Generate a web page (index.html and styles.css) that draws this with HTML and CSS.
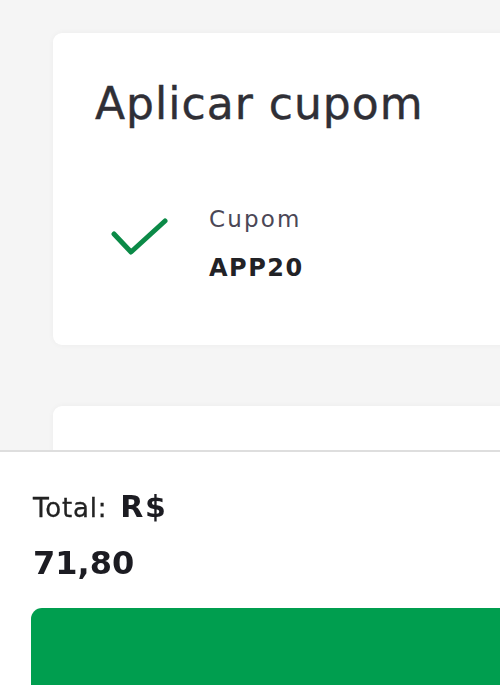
FILE: index.html
```html
<!DOCTYPE html>
<html lang="pt-BR">
<head>
<meta charset="utf-8">
<link rel="stylesheet" href="styles.css">
</head>
<body>
<main class="content">
  <section class="card coupon">
    <h1 class="title">Aplicar cupom</h1>
    <div class="coupon-row">
      <svg class="check" viewBox="0 0 57 38" width="57" height="38" aria-hidden="true">
        <path d="M3 16 L20 34 L54 3" fill="none" stroke="#0b8a47" stroke-width="5" stroke-linecap="round" stroke-linejoin="round"/>
      </svg>
      <div class="coupon-info">
        <span class="coupon-label">Cupom</span>
        <span class="coupon-code">APP20</span>
      </div>
    </div>
  </section>
  <section class="card next"></section>
</main>
<footer class="footer">
  <div class="total-line"><span class="total-label">Total:</span><strong class="currency">R$</strong></div>
  <div class="total-value">71,80</div>
  <button class="pay" type="button"></button>
</footer>
</body>
</html>
```
FILE: styles.css
```css
html, body {
  margin: 0;
  padding: 0;
  height: 100%;
  overflow: hidden;
}
body {
  background: #f5f5f5;
  font-family: "DejaVu Sans", "Liberation Sans", sans-serif;
  color: #2b2b2e;
}
.content {
  padding: 33px 0 0 53px;
  display: flex;
  flex-direction: column;
  gap: 61px;
}
.card {
  background: #fff;
  border-radius: 9px;
  width: 480px;
  box-shadow: 0 0 6px rgba(0, 0, 0, 0.04);
}
.coupon {
  height: 312px;
  box-sizing: border-box;
  padding: 45px 42px 0 42px;
}
.title {
  margin: 0;
  font-size: 44px;
  font-weight: 400;
  line-height: 52px;
  letter-spacing: 1px;
  color: #2f2f36;
  -webkit-text-stroke: 0.4px #2f2f36;
}
.coupon-row {
  display: flex;
  align-items: flex-start;
  gap: 41px;
  margin-top: 76px;
  padding-left: 16px;
}
.check {
  display: block;
  margin-top: 12px;
  flex: none;
}
.coupon-info {
  display: flex;
  flex-direction: column;
  gap: 22px;
}
.coupon-label {
  font-size: 23px;
  line-height: 26px;
  letter-spacing: 2.2px;
  color: #4b4756;
}
.coupon-code {
  font-size: 24px;
  line-height: 28px;
  font-weight: 700;
  letter-spacing: 1.5px;
  color: #222226;
}
.next {
  height: 200px;
}
.footer {
  position: fixed;
  left: 0;
  right: 0;
  bottom: 0;
  height: 235px;
  background: #fff;
  border-top: 2px solid #dedede;
  padding: 37px 0 0 31px;
  box-sizing: border-box;
}
.total-line {
  display: flex;
  align-items: baseline;
  gap: 13px;
  line-height: 36px;
  padding-left: 2px;
}
.total-label {
  font-size: 26px;
  letter-spacing: 0.8px;
  color: #222;
  -webkit-text-stroke: 0.3px #222;
}
.currency {
  font-size: 30px;
  font-weight: 700;
  letter-spacing: 1.5px;
  color: #1c1c22;
}
.total-value {
  margin-top: 19px;
  padding-left: 2px;
  font-size: 32px;
  line-height: 36px;
  font-weight: 700;
  color: #1c1c22;
}
.pay {
  display: block;
  margin-top: 27px;
  width: 480px;
  height: 120px;
  border: 0;
  border-radius: 11px;
  background: #009e4f;
}
```
